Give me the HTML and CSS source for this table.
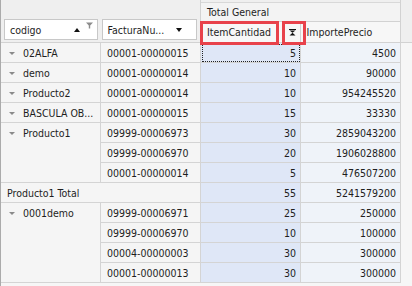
FILE: index.html
```html
<!DOCTYPE html>
<html lang="es">

<head>
    <meta charset="UTF-8">
    <meta name="viewport" content="width=device-width, initial-scale=1.0">
    <title>Pivot grid</title>
    <link rel="stylesheet" href="styles.css">
</head>

<body>
    <div class="pivot">
        <div class="head">
            <div class="fields">
                <div class="field field-codigo">
                    <span class="field-text">codigo</span>
                    <span class="sort-up"></span>
                    <svg class="filter" width="7" height="7" viewBox="0 0 7 7">
                        <path d="M0 0.5 H7 L4.2 3.6 V6.5 H2.8 V3.6 Z" fill="#8c8c8c" />
                    </svg>
                </div>
                <div class="field field-factura">
                    <span class="field-text">FacturaNu...</span>
                    <span class="drop"></span>
                </div>
            </div>
            <div class="colhead">
                <div class="grand">Total General</div>
                <div class="measures">
                    <div class="measure measure-item">
                        <span>ItemCantidad</span>
                        <svg class="sort-icon" width="7" height="7" viewBox="0 0 7 7">
                            <rect x="0" y="0" width="7" height="1" fill="#111" />
                            <path d="M0.5 1.5 H6.5 L3.5 3.8 Z M3.5 3.8 L6.5 6.5 H0.5 Z" fill="#111" />
                        </svg>
                    </div>
                    <div class="measure">ImportePrecio</div>
                </div>
            </div>
        </div>

        <div class="grid">
            <div class="rh"><span class="arrow"></span>02ALFA</div>
            <div class="rh2">00001-00000015</div>
            <div class="val qty focus">5</div>
            <div class="val price">4500</div>

            <div class="rh"><span class="arrow"></span>demo</div>
            <div class="rh2">00001-00000014</div>
            <div class="val qty">10</div>
            <div class="val price">90000</div>

            <div class="rh"><span class="arrow"></span>Producto2</div>
            <div class="rh2">00001-00000014</div>
            <div class="val qty">10</div>
            <div class="val price">954245520</div>

            <div class="rh"><span class="arrow"></span>BASCULA OB...</div>
            <div class="rh2">00001-00000015</div>
            <div class="val qty">15</div>
            <div class="val price">33330</div>

            <div class="rh span-3"><span class="arrow"></span>Producto1</div>
            <div class="rh2">09999-00006973</div>
            <div class="val qty">30</div>
            <div class="val price">2859043200</div>
            <div class="rh2">09999-00006970</div>
            <div class="val qty">20</div>
            <div class="val price">1906028800</div>
            <div class="rh2">00001-00000014</div>
            <div class="val qty">5</div>
            <div class="val price">476507200</div>

            <div class="rh total">Producto1 Total</div>
            <div class="val qty">55</div>
            <div class="val price">5241579200</div>

            <div class="rh span-4"><span class="arrow"></span>0001demo</div>
            <div class="rh2">09999-00006971</div>
            <div class="val qty">25</div>
            <div class="val price">250000</div>
            <div class="rh2">09999-00006970</div>
            <div class="val qty">10</div>
            <div class="val price">100000</div>
            <div class="rh2">00004-00000003</div>
            <div class="val qty">30</div>
            <div class="val price">300000</div>
            <div class="rh2">00001-00000013</div>
            <div class="val qty">30</div>
            <div class="val price">300000</div>
        </div>

        <!-- highlight marks drawn over the header -->
        <div class="mark mark-item"></div>
        <div class="mark mark-sort"></div>
    </div>
</body>

</html>
```

FILE: styles.css
```css
body {
    margin: 0;
    padding: 0;
    font-family: "DejaVu Sans Condensed", "DejaVu Sans", sans-serif;
    font-size: 10.5px;
    color: #1e1e1e;
    background: #f6f6f6;
}

.pivot {
    position: relative;
    width: 412px;
    height: 286px;
    overflow: hidden;
    border-left: 1px solid #ababab;
    box-sizing: border-box;
    background: #f6f6f6;
}

/* header */

.head {
    display: flex;
    height: 43px;
    box-sizing: border-box;
    border-bottom: 1px solid #d2d2d2;
    background: #efefef;
}

.fields {
    width: 200px;
    display: flex;
    gap: 4px;
    padding: 19px 3px 0 3px;
    box-sizing: border-box;
    border-right: 1px solid #d2d2d2;
}

.field {
    height: 21px;
    background: #ffffff;
    border: 1px solid #c8c8c8;
    box-sizing: border-box;
    display: flex;
    align-items: center;
    padding: 0 4px 0 5px;
}

.field-codigo {
    width: 94px;
}

.field-factura {
    width: 96px;
}

.field-text {
    flex-grow: 1;
}

.sort-up {
    width: 0;
    height: 0;
    border-left: 3.5px solid transparent;
    border-right: 3.5px solid transparent;
    border-bottom: 4px solid #111;
    margin-right: 6px;
    margin-top: 1px;
}

.filter {
    align-self: flex-start;
    margin-top: 2px;
}

.drop {
    width: 0;
    height: 0;
    border-left: 3.5px solid transparent;
    border-right: 3.5px solid transparent;
    border-top: 4px solid #111;
    margin-right: 10px;
}

.colhead {
    width: 200px;
    display: flex;
    flex-direction: column;
    padding-top: 2px;
    box-sizing: border-box;
    border-right: 1px solid #d2d2d2;
}

.grand {
    height: 20px;
    line-height: 19px;
    padding-left: 6px;
    box-sizing: border-box;
    border-top: 1px solid #d8d8d8;
    border-bottom: 1px solid #d2d2d2;
    background: #f3f3f3;
}

.measures {
    display: flex;
    flex-grow: 1;
}

.measure {
    width: 100px;
    display: flex;
    align-items: center;
    padding-left: 6px;
    box-sizing: border-box;
    background: #f7f7f7;
}

.measure-item {
    border-right: 1px solid #d2d2d2;
    justify-content: space-between;
    padding-right: 4px;
}

/* body */

.grid {
    display: grid;
    grid-template-columns: 100px 100px 100px 100px;
    grid-auto-rows: 20px;
}

.grid > div {
    box-sizing: border-box;
    border-right: 1px solid #d4d4d4;
    border-bottom: 1px solid #d4d4d4;
    display: flex;
    align-items: center;
    white-space: nowrap;
}

.rh,
.rh2 {
    background: #f5f5f5;
    padding-left: 6px;
}

.rh {
    align-items: flex-start !important;
    padding-top: 4px;
}

.arrow {
    width: 0;
    height: 0;
    border-left: 3px solid transparent;
    border-right: 3px solid transparent;
    border-top: 3px solid #8a8a8a;
    margin: 5px 8px 0 2px;
}

.span-3 {
    grid-row: span 3;
}

.span-4 {
    grid-row: span 4;
}

.total {
    grid-column: span 2;
}

.val {
    justify-content: flex-end;
    padding-right: 4px;
}

.qty {
    background: #dfe7f7;
}

.price {
    background: #eff3f9;
}

.focus {
    outline: 1px dotted #222;
    outline-offset: -2px;
}

/* red highlight boxes */

.mark {
    position: absolute;
    border: 3px solid #e8424b;
    box-sizing: border-box;
}

.mark-item {
    left: 199px;
    top: 21px;
    width: 79px;
    height: 24px;
}

.mark-sort {
    left: 281px;
    top: 21px;
    width: 24px;
    height: 24px;
}
```
